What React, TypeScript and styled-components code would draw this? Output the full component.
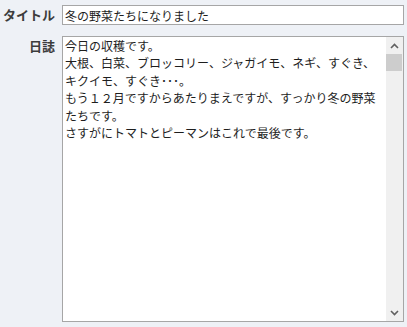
import styled, { createGlobalStyle } from "styled-components";

const GlobalStyle = createGlobalStyle`
  html, body {
    margin: 0;
    padding: 0;
    background: #eef1f6;
  }
  body {
    font-family: "Noto Sans CJK JP", "Noto Sans", sans-serif;
  }
`

const Form = styled.div`
  width: 407px;
  height: 327px;
  box-sizing: border-box;
  padding: 5px 3px 5px 0;
  display: grid;
  grid-template-columns: 55px 1fr;
  grid-template-rows: 20px 1fr;
  column-gap: 7px;
  row-gap: 11px;
  background: #eef1f6;
`

const Label = styled.label<{ $top?: number }>`
  text-align: right;
  font-size: 13px;
  font-weight: bold;
  color: #3c3c3c;
  line-height: 20px;
  padding-top: ${(p) => p.$top ?? 0}px;
  white-space: nowrap;
`

const TitleInput = styled.input`
  box-sizing: border-box;
  width: 100%;
  height: 20px;
  margin: 0;
  padding: 0 2px;
  border: 1px solid #a6a6a6;
  background: #fff;
  font-family: "Noto Sans CJK JP", sans-serif;
  font-size: 12px;
  color: #1e1e1e;
  outline: none;
`

const MemoBox = styled.div`
  box-sizing: border-box;
  border: 1px solid #a6a6a6;
  background: #fff;
  display: flex;
  min-height: 0;
`

const MemoText = styled.textarea`
  flex: 1;
  border: none;
  margin: 0;
  padding: 0 2px;
  resize: none;
  overflow: hidden;
  outline: none;
  font-family: "Noto Sans CJK JP", sans-serif;
  font-size: 12px;
  line-height: 17.4px;
  color: #1e1e1e;
  background: transparent;
`

const ScrollBar = styled.div`
  width: 17px;
  background: #f0f0f0;
  display: flex;
  flex-direction: column;
`

const ArrowButton = styled.div`
  height: 17px;
  display: flex;
  align-items: center;
  justify-content: center;
`

const Thumb = styled.div`
  height: 17px;
  margin: 0 1px 0 0;
  background: #cdcdcd;
`

const Track = styled.div`
  flex: 1;
`

const Chevron = ({ up }: { up?: boolean }) => (
  <svg width="9" height="6" viewBox="0 0 9 6">
    <path
      d={up ? "M1 5 L4.5 1.5 L8 5" : "M1 1 L4.5 4.5 L8 1"}
      fill="none"
      stroke="#606060"
      strokeWidth="1.6"
    />
  </svg>
)

const memo = `今日の収穫です。
大根、白菜、ブロッコリー、ジャガイモ、ネギ、すぐき、キクイモ、すぐき･･･。
もう１２月ですからあたりまえですが、すっかり冬の野菜たちです。
さすがにトマトとピーマンはこれで最後です。`

export default function App() {
  return (
    <>
      <GlobalStyle />
      <Form>
        <Label>タイトル</Label>
        <TitleInput defaultValue="冬の野菜たちになりました" />
        <Label $top={0}>日誌</Label>
        <MemoBox>
          <MemoText defaultValue={memo} />
          <ScrollBar>
            <ArrowButton><Chevron up /></ArrowButton>
            <Thumb />
            <Track />
            <ArrowButton><Chevron /></ArrowButton>
          </ScrollBar>
        </MemoBox>
      </Form>
    </>
  )
}
